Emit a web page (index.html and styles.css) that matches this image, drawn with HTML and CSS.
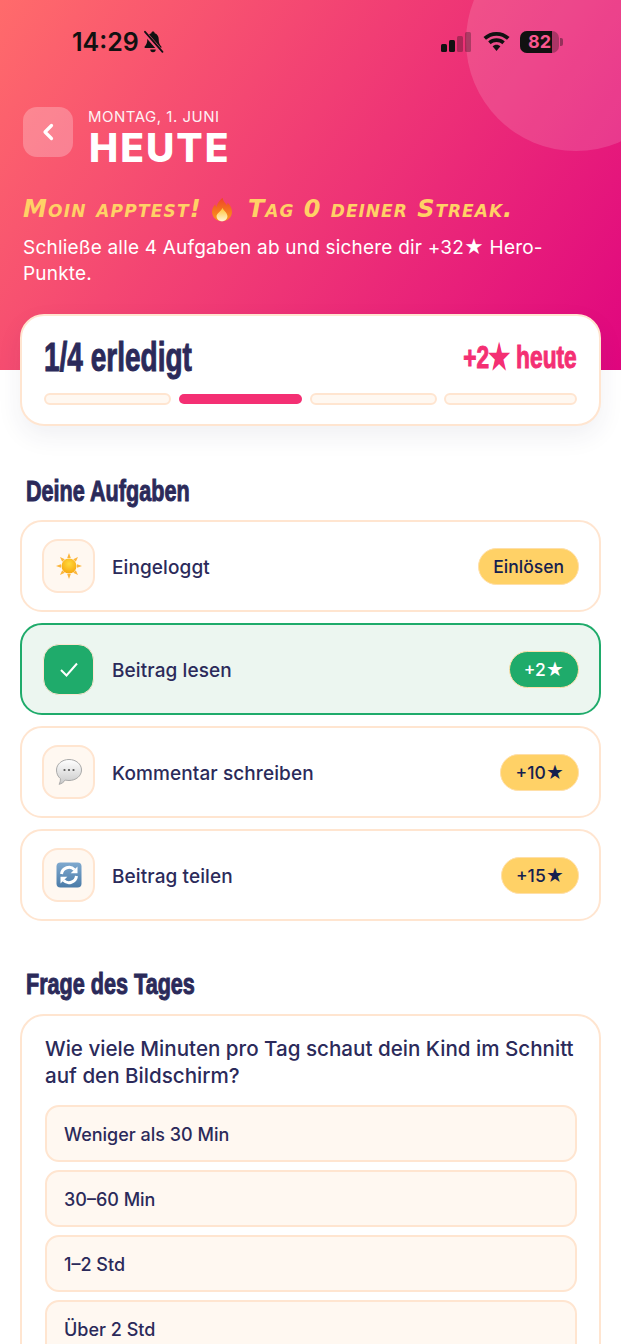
FILE: index.html
```html
<!DOCTYPE html>
<html>
<head>
  <title>Heute</title>
  <link rel="stylesheet" href="styles.css">
</head>
<body>
  <header class="hero">
    <div class="hero-circle"></div>

    <div class="status-bar">
      <div class="status-left">
        <span class="time">14:29</span>
        <svg class="bell" width="22" height="24" viewBox="0 0 22 24">
          <path d="M11 1.500c-1 0-1.600.7-1.700 1.700C6.800 4 5.300 6.200 5.300 9c0 3.500-.7 5.600-2.600 7.600-.5.6-.2 1.400.6 1.400h15.400c.8 0 1.100-.8.6-1.400-1.900-2-2.600-4.100-2.600-7.600 0-2.800-1.500-5-4-5.800-.1-1-.7-1.700-1.700-1.700z" fill="#111"/>
          <path d="M8.300 19.500h5.400a2.700 2.700 0 0 1-5.400 0z" fill="#111"/>
          <path d="M2.500 2.500l17.500 20" stroke="#f8557a" stroke-width="4.200"/>
          <path d="M3 1.800l17.500 20" stroke="#111" stroke-width="1.800" stroke-linecap="round"/>
        </svg>
      </div>
      <div class="status-right">
        <svg width="31" height="20" viewBox="0 0 31 20">
          <rect x="0" y="12" width="6" height="8" rx="1.500" fill="#111"/>
          <rect x="8" y="8" width="6" height="12" rx="1.500" fill="#111"/>
          <rect x="16" y="4" width="6" height="16" rx="1.500" fill="#111" opacity=".3"/>
          <rect x="24" y="0" width="6" height="20" rx="1.500" fill="#111" opacity=".3"/>
        </svg>
        <svg width="27" height="20" viewBox="0 0 27 20">
          <path d="M13.500 0C8.500 0 4 1.900.5 5.100l2.500 2.700C5.800 5.300 9.500 3.700 13.500 3.700s7.700 1.600 10.500 4.100l2.500-2.700C23 1.900 18.500 0 13.500 0z" fill="#111"/>
          <path d="M13.500 6.300c-3.200 0-6.100 1.200-8.300 3.200l2.500 2.700c1.500-1.400 3.600-2.200 5.800-2.200s4.300.8 5.800 2.200l2.500-2.700c-2.200-2-5.100-3.200-8.300-3.200z" fill="#111"/>
          <path d="M13.500 12.700c-1.500 0-2.900.6-3.900 1.500l3.900 4.800 3.900-4.800c-1-.9-2.400-1.500-3.900-1.500z" fill="#111"/>
        </svg>
        <div class="battery">
          <div class="battery-body"><span class="battery-fill"></span><span class="battery-num">82</span></div>
          <span class="battery-cap"></span>
        </div>
      </div>
    </div>

    <div class="hero-head">
      <div class="back-btn">
        <svg width="14" height="18" viewBox="0 0 14 18"><path d="M10.500 2.500L4 9l6.500 6.500" fill="none" stroke="#fff" stroke-width="3.200" stroke-linecap="round" stroke-linejoin="round"/></svg>
      </div>
      <div>
        <div class="hero-date">MONTAG, 1. JUNI</div>
        <h1 class="hero-title">HEUTE</h1>
      </div>
    </div>

    <p class="streak">
      <span class="streak-hello">Moin apptest!</span>
      <svg class="fire" width="20" height="25" viewBox="0 0 22 26">
        <defs>
          <linearGradient id="fireOuter" x1="0" y1="0" x2="0" y2="1"><stop offset="0" stop-color="#ee4526"/><stop offset="1" stop-color="#fb9a1c"/></linearGradient>
          <linearGradient id="fireInner" x1="0" y1="0" x2="0" y2="1"><stop offset="0" stop-color="#ffc22e"/><stop offset="1" stop-color="#fff6d8"/></linearGradient>
        </defs>
        <path d="M11.500 0c.8 4 3 5.500 5 8.200 .5-1 .7-2 .6-3C20 8 22 11.500 22 15.500 22 21.500 17 26 11 26S0 21.500 0 15.500c0-3.500 1.800-6 3.500-8.200.2 1.300.7 2.300 1.600 3C5.300 6.500 8 3 11.500 0z" fill="url(#fireOuter)"/>
        <path d="M11.500 11c.4 2.500 5.500 5 5.500 9.500 0 3-2.700 5.500-6 5.500s-6-2.500-6-5.500c0-3.500 5.200-5.500 6.500-9.500z" fill="url(#fireInner)"/>
      </svg>
      <span>Tag 0 deiner Streak.</span>
    </p>
    <p class="hero-sub">Schließe alle 4 Aufgaben ab und sichere dir +32★ Hero-<br>Punkte.</p>
  </header>

  <main class="content">
    <section class="progress-card">
      <div class="progress-head">
        <span class="progress-title">1/4 erledigt</span>
        <span class="progress-today">+2★ heute</span>
      </div>
      <div class="segments">
        <span class="segment"></span>
        <span class="segment done"></span>
        <span class="segment"></span>
        <span class="segment"></span>
      </div>
    </section>

    <h2 class="section-title first">Deine Aufgaben</h2>
    <div class="task-list">
      <div class="task">
        <div class="task-icon">
          <svg width="26" height="26" viewBox="0 0 26 26">
            <defs>
              <radialGradient id="sunFill" cx=".5" cy=".35" r=".7"><stop offset="0" stop-color="#ffd93b"/><stop offset="1" stop-color="#f6a40e"/></radialGradient>
            </defs>
            <path d="M13 0l1.800 5h-3.600zM13 26l-1.800-5h3.600zM0 13l5-1.800v3.600zM26 13l-5 1.800v-3.600zM4 4l4.800 2.200-2.600 2.600zM22 22l-4.800-2.200 2.600-2.600zM22 4l-2.200 4.800-2.600-2.600zM4 22l2.200-4.800 2.600 2.600z" fill="#fbb53c"/>
            <circle cx="13" cy="13" r="7.500" fill="url(#sunFill)"/>
          </svg>
        </div>
        <span class="task-label">Eingeloggt</span>
        <span class="pill">Einlösen</span>
      </div>

      <div class="task task-done">
        <div class="task-icon">
          <svg width="20" height="17" viewBox="0 0 20 17"><path d="M2 9l5.500 5.500L18 2.500" fill="none" stroke="#fff" stroke-width="2"/></svg>
        </div>
        <span class="task-label">Beitrag lesen</span>
        <span class="pill pill-done">+2★</span>
      </div>

      <div class="task">
        <div class="task-icon">
          <svg width="26" height="26" viewBox="0 0 26 26">
            <defs>
              <linearGradient id="bubbleFill" x1="0" y1="0" x2="0" y2="1"><stop offset="0" stop-color="#ffffff"/><stop offset="1" stop-color="#c9c9c9"/></linearGradient>
            </defs>
            <path d="M13 .5c7 0 12.500 4.600 12.500 10.500S20 21.500 13 21.500c-1.300 0-2.600-.2-3.800-.5-1.300 2-3.400 3.700-6.200 4.300 1-1.500 1.500-3.300 1.400-5.700C1.900 17.700.5 14.500.5 11 .5 5.100 6 .5 13 .5z" fill="url(#bubbleFill)" stroke="#a9a9a9" stroke-width="1"/>
            <circle cx="8.500" cy="11" r="1.100" fill="#555"/>
            <circle cx="13" cy="11" r="1.100" fill="#555"/>
            <circle cx="17.500" cy="11" r="1.100" fill="#555"/>
          </svg>
        </div>
        <span class="task-label">Kommentar schreiben</span>
        <span class="pill">+10★</span>
      </div>

      <div class="task">
        <div class="task-icon">
          <svg width="26" height="26" viewBox="0 0 26 26">
            <defs>
              <linearGradient id="shareFill" x1="0" y1="0" x2="0" y2="1"><stop offset="0" stop-color="#7fa9cf"/><stop offset="1" stop-color="#4a7ba8"/></linearGradient>
            </defs>
            <rect x=".5" y=".5" width="25" height="25" rx="4" fill="url(#shareFill)"/>
            <path d="M5.500 12a7.600 7.600 0 0 1 13-4.300" fill="none" stroke="#fff" stroke-width="3"/>
            <path d="M21.500 4.500v6.800h-6.800z" fill="#fff"/>
            <path d="M20.500 14a7.600 7.600 0 0 1-13 4.300" fill="none" stroke="#fff" stroke-width="3"/>
            <path d="M4.500 21.500v-6.800h6.800z" fill="#fff"/>
          </svg>
        </div>
        <span class="task-label">Beitrag teilen</span>
        <span class="pill">+15★</span>
      </div>
    </div>

    <h2 class="section-title second">Frage des Tages</h2>
    <section class="question-card">
      <p class="question">Wie viele Minuten pro Tag schaut dein Kind im Schnitt auf den Bildschirm?</p>
      <div class="option">Weniger als 30 Min</div>
      <div class="option">30–60 Min</div>
      <div class="option">1–2 Std</div>
      <div class="option">Über 2 Std</div>
    </section>
  </main>
</body>
</html>
```

FILE: styles.css
```css
:root {
  --navy: #2b2a5a;
  --border: #ffe5d0;
  --cream: #fff8f1;
  --pink: #f42f73;
  --green: #1fab6b;
  --yellow: #ffd166;
}

html, body {
  height: 1344px;
  overflow: hidden;
}

body {
  margin: 0;
  background: #fff;
  color: var(--navy);
  font-family: "Inter", "Noto Sans", sans-serif;
}

/* Hero */
.hero {
  position: relative;
  overflow: hidden;
  height: 370px;
  box-sizing: border-box;
  padding: 0 23px;
  background: linear-gradient(125deg, #ff6b6b 0%, #e0067f 100%);
}

.hero-circle {
  position: absolute;
  top: -69px;
  right: -65px;
  width: 220px;
  height: 220px;
  border-radius: 50%;
  background: rgba(255, 255, 255, 0.14);
}

.status-bar {
  position: relative;
  display: flex;
  justify-content: space-between;
  align-items: center;
  height: 30px;
  padding: 27px 35px 0 49px;
}

.status-left {
  display: flex;
  align-items: center;
  gap: 3px;
}

.time {
  font-size: 25px;
  font-weight: 600;
  color: #111;
}

.status-right {
  display: flex;
  align-items: center;
  gap: 11px;
}

.status-right .battery {
  margin-left: -1px;
}

.battery {
  display: flex;
  align-items: center;
  gap: 1px;
}

.battery-body {
  position: relative;
  overflow: hidden;
  width: 39px;
  height: 22px;
  border-radius: 7px;
  background: rgba(17, 17, 17, 0.3);
}

.battery-fill {
  position: absolute;
  inset: 0 7px 0 0;
  background: #111;
}

.battery-num {
  position: relative;
  display: block;
  text-align: center;
  font-size: 18px;
  font-weight: 700;
  line-height: 22px;
  color: #f9578f;
}

.battery-cap {
  width: 3px;
  height: 8px;
  border-radius: 0 2px 2px 0;
  background: rgba(17, 17, 17, 0.4);
}

.hero-head {
  position: relative;
  display: flex;
  align-items: flex-start;
  gap: 15px;
  margin-top: 50px;
}

.back-btn {
  display: flex;
  justify-content: center;
  align-items: center;
  width: 50px;
  height: 50px;
  border-radius: 14px;
  background: rgba(255, 255, 255, 0.25);
}

.hero-date {
  margin-top: 1px;
  font-size: 15px;
  letter-spacing: 0.5px;
  line-height: 18px;
  color: #fff;
  opacity: 0.92;
}

.hero-title {
  margin: 6px 0 0;
  padding-left: 1px;
  font-size: 39px;
  font-weight: 800;
  letter-spacing: 2px;
  line-height: 32px;
  color: #fff;
}

.streak {
  position: relative;
  display: flex;
  align-items: center;
  margin: 30px 0 0;
  height: 30px;
  font-family: "DejaVu Sans", sans-serif;
  font-size: 24px;
  font-weight: 700;
  font-style: italic;
  font-variant: small-caps;
  letter-spacing: 1px;
  white-space: nowrap;
  color: var(--yellow);
}

.streak-hello {
  letter-spacing: 1.2px;
}

.fire {
  flex: none;
  margin: 0 16px 0 10px;
}

.hero-sub {
  position: relative;
  margin: 11px 0 0;
  font-size: 19px;
  letter-spacing: 0.2px;
  line-height: 26px;
  color: #fff;
}

/* Main content */
.content {
  padding: 0 20px;
}

.progress-card {
  position: relative;
  box-sizing: border-box;
  height: 112px;
  margin-top: -56px;
  padding: 19px 22px 0;
  background: #fff;
  border: 2px solid var(--border);
  border-radius: 24px;
  box-shadow: 0 10px 26px rgba(43, 42, 90, 0.07);
}

.progress-head {
  display: flex;
  justify-content: space-between;
  align-items: center;
  height: 44px;
}

/* no condensed font installed, so squeeze the bold one */
.progress-title,
.progress-today,
.section-title {
  font-family: "Liberation Sans", sans-serif;
  font-weight: 700;
  -webkit-text-stroke: 1px currentColor;
}

.progress-title {
  display: inline-block;
  font-size: 40px;
  transform: scaleX(0.7);
  transform-origin: left center;
  white-space: nowrap;
}

.progress-today {
  display: inline-block;
  font-size: 32px;
  transform: scaleX(0.71);
  transform-origin: right center;
  white-space: nowrap;
  color: var(--pink);
}

.segments {
  display: flex;
  gap: 7px;
  margin-top: 14px;
}

.segment {
  flex: 1;
  box-sizing: border-box;
  height: 12px;
  border: 2px solid var(--border);
  border-radius: 6px;
  background: var(--cream);
}

.segment:last-child {
  flex: 1.05;
}

.segment.done {
  border-color: transparent;
  background: var(--pink) padding-box;
  border-width: 1px;
}

.section-title {
  width: fit-content;
  margin: 0 0 0 6px;
  font-size: 30px;
  line-height: 34px;
  white-space: nowrap;
  transform: scaleX(0.72);
  transform-origin: left center;
}

.section-title.first {
  margin-top: 48px;
  margin-bottom: 12px;
}

.section-title.second {
  margin-top: 46px;
  margin-bottom: 13px;
}

/* Tasks */
.task-list {
  display: flex;
  flex-direction: column;
  gap: 11px;
}

.task {
  display: flex;
  align-items: center;
  box-sizing: border-box;
  height: 92px;
  padding: 0 20px;
  background: #fff;
  border: 2px solid var(--border);
  border-radius: 22px;
}

.task-done {
  background: #ecf6f0;
  border-color: var(--green);
}

.task-icon {
  display: flex;
  justify-content: center;
  align-items: center;
  flex: none;
  box-sizing: border-box;
  width: 53px;
  height: 54px;
  margin-right: 17px;
  background: var(--cream);
  border: 2px solid var(--border);
  border-radius: 16px;
}

.task-done .task-icon {
  width: 51px;
  height: 51px;
  margin: 0 18px 0 1px;
  background: var(--green);
  border-width: 1px;
}

.task-label {
  flex: 1;
  padding-top: 2px;
  font-size: 19px;
  font-weight: 500;
  letter-spacing: 0.1px;
}

.pill {
  box-sizing: border-box;
  height: 37px;
  padding: 0 14px;
  background: var(--yellow);
  border: 1px solid #ffdfa8;
  border-radius: 19px;
  font-size: 17.5px;
  font-weight: 500;
  line-height: 35px;
  color: #14204f;
}

.pill-done {
  background: var(--green);
  color: #fff;
}

/* Question */
.question-card {
  box-sizing: border-box;
  height: 360px;
  padding: 19px 22px 19px 23px;
  background: #fff;
  border: 2px solid var(--border);
  border-radius: 24px;
}

.question {
  margin: 0 0 16px;
  font-size: 20.6px;
  font-weight: 500;
  line-height: 27px;
}

.option {
  box-sizing: border-box;
  height: 57px;
  margin-bottom: 8px;
  padding-left: 17px;
  background: var(--cream);
  border: 2px solid var(--border);
  border-radius: 14px;
  font-size: 18px;
  font-weight: 500;
  line-height: 55px;
}
```
